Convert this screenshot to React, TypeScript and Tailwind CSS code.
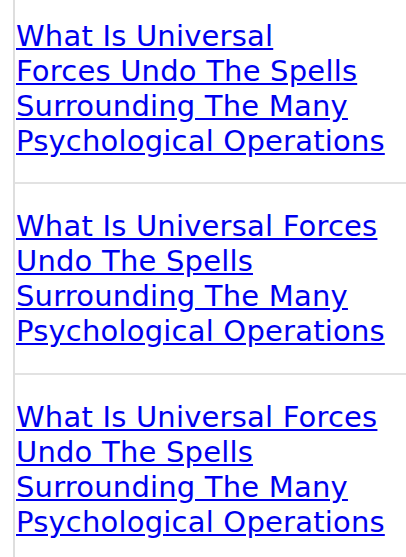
import React from "react";

const lines = [
  ["What Is Universal", "Forces Undo The Spells", "Surrounding The Many", "Psychological Operations"],
  ["What Is Universal Forces", "Undo The Spells", "Surrounding The Many", "Psychological Operations"],
  ["What Is Universal Forces", "Undo The Spells", "Surrounding The Many", "Psychological Operations"],
];

export default function App() {
  return (
    <div className="min-h-[557px] w-[406px] bg-white overflow-hidden">
      <div className="ml-[13px] border-l-2 border-[#dedede] min-h-[557px]">
        {lines.map((item, i) => (
          <div
            key={i}
            className={`pl-[1px] ${i === 0 ? "pt-[19px] pb-[23px]" : "pt-[25px] pb-[24px]"} ${i < 2 ? "border-b-2 border-[#e2e2e2]" : ""}`}
          >
            <a
              href="#"
              className="text-[29px] leading-[35px] tracking-[0.2px] text-[#0000ee] underline"
              style={{ fontFamily: '"DejaVu Sans", Verdana, sans-serif' }}
            >
              {item.map((l, j) => (
                <React.Fragment key={j}>
                  {l}
                  {j < item.length - 1 && <br />}
                </React.Fragment>
              ))}
            </a>
          </div>
        ))}
      </div>
    </div>
  );
}
